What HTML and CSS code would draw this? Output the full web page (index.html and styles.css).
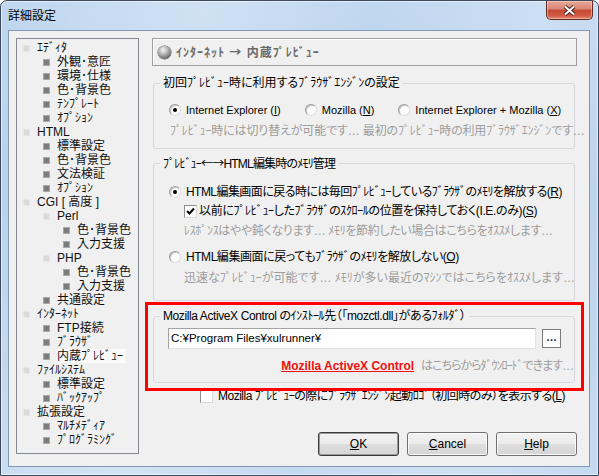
FILE: index.html
```html
<!DOCTYPE html>
<html lang="ja">
<head>
<meta charset="utf-8">
<title>詳細設定</title>
<link rel="stylesheet" href="styles.css">
</head>
<body>
<div class="window">
  <div class="titlebar">
    <span class="title">詳細設定</span>
    <span class="close">
      <svg width="13" height="11" viewBox="0 0 13 11"><path d="M2 1.5 L11 9.5 M11 1.5 L2 9.5" stroke="#4b2520" stroke-width="4"/><path d="M2 1.5 L11 9.5 M11 1.5 L2 9.5" stroke="#fff" stroke-width="2"/></svg>
    </span>
  </div>
  <div class="client">
    <ul class="tree">
      <li class="l0 folder"><span>ｴﾃﾞｨﾀ</span></li>
      <li class="l1"><span>外観･意匠</span></li>
      <li class="l1"><span>環境･仕様</span></li>
      <li class="l1"><span>色･背景色</span></li>
      <li class="l1"><span>ﾃﾝﾌﾟﾚｰﾄ</span></li>
      <li class="l1"><span>ｵﾌﾟｼｮﾝ</span></li>
      <li class="l0 folder"><span>HTML</span></li>
      <li class="l1"><span>標準設定</span></li>
      <li class="l1"><span>色･背景色</span></li>
      <li class="l1"><span>文法検証</span></li>
      <li class="l1"><span>ｵﾌﾟｼｮﾝ</span></li>
      <li class="l0 folder"><span>CGI [ 高度 ]</span></li>
      <li class="l1 folder"><span>Perl</span></li>
      <li class="l2"><span>色･背景色</span></li>
      <li class="l2"><span>入力支援</span></li>
      <li class="l1 folder"><span>PHP</span></li>
      <li class="l2"><span>色･背景色</span></li>
      <li class="l2"><span>入力支援</span></li>
      <li class="l1"><span>共通設定</span></li>
      <li class="l0 folder"><span>ｲﾝﾀｰﾈｯﾄ</span></li>
      <li class="l1"><span>FTP接続</span></li>
      <li class="l1"><span>ﾌﾞﾗｳｻﾞ</span></li>
      <li class="l1 selected"><span>内蔵ﾌﾟﾚﾋﾞｭｰ</span></li>
      <li class="l0 folder"><span>ﾌｧｲﾙｼｽﾃﾑ</span></li>
      <li class="l1"><span>標準設定</span></li>
      <li class="l1"><span>ﾊﾞｯｸｱｯﾌﾟ</span></li>
      <li class="l0 folder"><span>拡張設定</span></li>
      <li class="l1"><span>ﾏﾙﾁﾒﾃﾞｨｱ</span></li>
      <li class="l1"><span>ﾌﾟﾛｸﾞﾗﾐﾝｸﾞ</span></li>
    </ul>
    <div class="main">
      <div class="header"><span class="orb"></span><span>ｲﾝﾀｰﾈｯﾄ <span class="cjk">→</span> 内蔵ﾌﾟﾚﾋﾞｭｰ</span></div>

      <fieldset class="group g1">
        <legend>初回ﾌﾟﾚﾋﾞｭｰ時に利用するﾌﾞﾗｳｻﾞｴﾝｼﾞﾝの設定</legend>
        <div class="body">
          <div class="row options">
            <span class="opt"><span class="radio on"></span>Internet Explorer (<u>I</u>)</span>
            <span class="opt"><span class="radio"></span>Mozilla (<u>N</u>)</span>
            <span class="opt"><span class="radio"></span>Internet Explorer + Mozilla (<u>X</u>)</span>
          </div>
          <div class="row note n1">ﾌﾟﾚﾋﾞｭｰ時には切り替えが可能です… 最初のﾌﾟﾚﾋﾞｭｰ時の利用ﾌﾞﾗｳｻﾞｴﾝｼﾞﾝです…</div>
        </div>
      </fieldset>

      <fieldset class="group g2">
        <legend class="lg2">ﾌﾟﾚﾋﾞｭｰ<span class="cjk">←→</span>HTML編集時のﾒﾓﾘ管理</legend>
        <div class="body">
          <div class="row r1"><span class="radio on"></span>HTML編集画面に戻る時には毎回ﾌﾟﾚﾋﾞｭｰしているﾌﾞﾗｳｻﾞのﾒﾓﾘを解放する(<u>R</u>)</div>
          <div class="row sub r2"><span class="check on"><svg width="9" height="9" viewBox="0 0 9 9"><path d="M1 4 L3.5 6.5 L8 1.5" fill="none" stroke="#000" stroke-width="2"/></svg></span>以前にﾌﾟﾚﾋﾞｭｰしたﾌﾞﾗｳｻﾞのｽｸﾛｰﾙの位置を保持しておく(I.E.のみ)(<u>S</u>)</div>
          <div class="row note sub r3">ﾚｽﾎﾟﾝｽはやや鈍くなります… ﾒﾓﾘを節約したい場合はこちらをｵｽｽﾒします…</div>
          <div class="row r4"><span class="radio"></span>HTML編集画面に戻ってもﾌﾞﾗｳｻﾞのﾒﾓﾘを解放しない(<u>O</u>)</div>
          <div class="row note sub r5">迅速なﾌﾟﾚﾋﾞｭｰが可能です… ﾒﾓﾘが多い最近のﾏｼﾝではこちらをｵｽｽﾒします…</div>
        </div>
      </fieldset>

      <fieldset class="group g3">
        <legend class="lg3">Mozilla ActiveX Control のｲﾝｽﾄｰﾙ先（「mozctl.dll」があるﾌｫﾙﾀﾞ）</legend>
        <div class="body">
          <div class="pathrow">
            <div class="path">C:¥Program Files¥xulrunner¥</div>
            <span class="browse">…</span>
          </div>
          <div class="row linkrow"><span class="link">Mozilla ActiveX Control</span><span class="note dl">はこちらからﾀﾞｳﾝﾛｰﾄﾞできます…</span></div>
        </div>
      </fieldset>

      <div class="row logo"><span class="check"></span>Mozilla ﾌﾟﾚﾋﾞｭｰの際にﾌﾞﾗｳｻﾞｴﾝｼﾞﾝ起動ﾛｺﾞ（初回時のみ）を表示する(<u>L</u>)</div>

      <div class="buttons">
        <span class="btn default"><u>O</u>K</span>
        <span class="btn"><u>C</u>ancel</span>
        <span class="btn"><u>H</u>elp</span>
      </div>
    </div>
  </div>
</div>
<div class="highlight"></div>
</body>
</html>
```
FILE: styles.css
```css
* { box-sizing: border-box; }
html, body { margin: 0; padding: 0; }
body {
  position: relative;
  width: 599px;
  height: 476px;
  overflow: hidden;
  background: #fff;
  font-family: "Liberation Sans", "Noto Sans CJK JP", sans-serif;
  font-size: 12px;
  font-feature-settings: "palt";
  color: #000;
}
u { text-decoration: underline; text-underline-offset: 1px; }
.cjk { font-family: "Noto Sans CJK JP", sans-serif; }

.window {
  width: 599px;
  height: 476px;
  border: 1px solid #3b4a5e;
  border-radius: 7px 7px 0 0;
  background:
    linear-gradient(100deg, rgba(255,255,255,0) 0%, rgba(255,255,255,.25) 30%, rgba(255,255,255,0) 55%, rgba(255,255,255,.2) 80%, rgba(255,255,255,0) 100%),
    linear-gradient(180deg, #c0d7f0 0%, #b7d0eb 40%, #c4daf2 100%);
  box-shadow: inset 0 0 0 1px rgba(255,255,255,.55);
  display: flex;
  flex-direction: column;
}

.titlebar {
  height: 29px;
  display: flex;
  justify-content: space-between;
  align-items: flex-start;
  flex: none;
}
.title {
  font-family: "Noto Sans CJK JP", sans-serif;
  font-size: 12px;
  line-height: 16px;
  margin: 6px 0 0 7px;
}
.close {
  width: 47px;
  height: 19px;
  margin-right: 5px;
  border: 1px solid #5e2a22;
  border-top: 0;
  border-radius: 0 0 5px 5px;
  background: linear-gradient(180deg, #e9a99b 0%, #d88473 45%, #c44a33 50%, #cf5a42 80%, #e08a6c 100%);
  box-shadow: inset 0 0 0 1px rgba(255,220,210,.5);
  display: flex;
  align-items: center;
  justify-content: center;
}

.client {
  flex: none;
  width: 582px;
  height: 437px;
  margin: 0 8px 0 7px;
  border: 1px solid #8397b2;
  background: #f0f0f0;
  display: flex;
  align-items: flex-start;
  padding: 7px 12px 0 7px;
  gap: 13px;
}

/* tree */
.tree {
  list-style: none;
  margin: 0;
  padding: 2px 0 0 0;
  width: 123px;
  height: 416px;
  flex: none;
  border: 1px solid #828790;
  background: #f0f0f0;
}
.tree li {
  height: 14px;
  line-height: 14px;
  display: flex;
  align-items: center;
  white-space: nowrap;
  color: #111;
}
.tree li::before {
  content: "";
  flex: none;
  width: 7px;
  height: 7px;
  margin: 0 7px 0 6px;
  background: #7c7c7c;
  box-shadow: inset 0 0 0 1px #a9a9a9;
}
.tree li.folder::before {
  background: #dadada;
  box-shadow: inset 0 0 0 1px #e6e6e6;
}
.tree .l1 { padding-left: 20px; }
.tree .l2 { padding-left: 40px; }
.tree li.selected span {
  background: #fafafa;
  margin-left: -1px;
  padding: 0 3px 0 1px;
}

/* main */
.main {
  width: 425px;
  flex: none;
  display: flex;
  flex-direction: column;
}
.header {
  height: 28px;
  border: 1px solid #a0a0a0;
  box-shadow: inset 1px 1px 0 #fff;
  display: flex;
  align-items: center;
  padding-left: 5px;
  color: #6a6a6a;
  font-weight: bold;
  line-height: 14px;
  letter-spacing: 1px;
}
.orb {
  width: 13px;
  height: 13px;
  border-radius: 50%;
  margin-right: 5px;
  background: radial-gradient(circle at 40% 30%, #f6f6f6 0, #c4c4c4 30%, #6a6a6a 75%, #3c3c3c 100%);
  box-shadow: 0 0 0 0.5px #555;
}

.group {
  margin: 10px 2px 0 1px;
  padding: 0;
  min-width: 0;
  border: 1px solid #d5d9de;
  border-radius: 3px;
}
.group legend {
  margin-left: 6px;
  padding: 0 3px;
  line-height: 14px;
  height: 14px;
}
.lg2 { letter-spacing: -0.8px; }
.lg3 { letter-spacing: -0.4px; }
.g1 .body { padding: 12px 0 9px 15px; }
.g2 { margin-top: 7px; }
.g2 .body { padding: 14px 0 14px 15px; }
.g3 { margin-top: 8px; }
.g3 .body { padding: 5px 1px 8px 14px; }

.row {
  display: flex;
  align-items: center;
  height: 16px;
  line-height: 16px;
  white-space: nowrap;
}
.options { gap: 24px; font-size: 11px; }
.opt { display: flex; align-items: center; }
.note { color: #9c9c9c; }
.n1 { margin: 5px 0 0 1px; letter-spacing: -0.14px; }
.sub { margin-left: 15px; }
.r1 { letter-spacing: -0.55px; }
.r2 { margin-top: 3px; letter-spacing: -0.36px; }
.r3 { margin-top: 4px; letter-spacing: -0.34px; }
.r4 { margin-top: 10px; letter-spacing: -0.45px; }
.r5 { margin-top: 5px; }

.radio {
  flex: none;
  width: 12px;
  height: 12px;
  margin-right: 5px;
  border-radius: 50%;
  background: #fff;
  border: 1px solid;
  border-color: #9a9a9a #dcdcdc #dcdcdc #9a9a9a;
  box-shadow: inset 1px 1px 0 #c8c8c8;
  display: flex;
  align-items: center;
  justify-content: center;
}
.radio.on::after {
  content: "";
  width: 4px;
  height: 4px;
  border-radius: 50%;
  background: #000;
}
.check {
  flex: none;
  width: 13px;
  height: 13px;
  margin-right: 2px;
  background: #fff;
  border: 1px solid;
  border-color: #8e8e8e #d8d8d8 #d8d8d8 #8e8e8e;
  display: flex;
  align-items: center;
  justify-content: center;
}

.pathrow { display: flex; align-items: center; gap: 6px; padding-right: 12px; }
.path {
  width: 368px;
  height: 21px;
  line-height: 19px;
  padding: 0 2px;
  background: #fff;
  border: 1px solid;
  border-color: #a3a3a3 #e2e2e2 #e2e2e2 #a3a3a3;
  white-space: nowrap;
  font-size: 11.5px;
}
.browse {
  width: 19px;
  height: 19px;
  border: 1px solid #7a7a7a;
  background: #fcfcfc;
  color: #1c1c5e;
  line-height: 15px;
  text-align: center;
  font-weight: bold;
  font-size: 11px;
}
.linkrow { justify-content: flex-end; margin-top: 9px; gap: 7px; }
.link { color: #f01010; font-weight: bold; text-decoration: underline; }
.dl { letter-spacing: -1px; }

.logo { margin: 5px 0 0 48px; letter-spacing: -0.5px; }
.logo .check { margin-right: 5px; }

.buttons {
  display: flex;
  justify-content: flex-end;
  gap: 8px;
  margin-top: 28px;
}
.btn {
  width: 81px;
  height: 24px;
  line-height: 22px;
  text-align: center;
  border: 1px solid #707070;
  border-radius: 3px;
  background: linear-gradient(180deg, #f2f2f2 0%, #ebebeb 48%, #dddddd 52%, #d6d6d6 100%);
  box-shadow: inset 0 0 0 1px #fbfbfb;
}
.btn.default {
  border-color: #3a3a3a;
  box-shadow: inset 0 0 0 1px #9a9a9a;
}

.highlight {
  position: absolute;
  left: 145px;
  top: 302px;
  width: 439px;
  height: 89px;
  border: 3px solid #ff0000;
}
```
